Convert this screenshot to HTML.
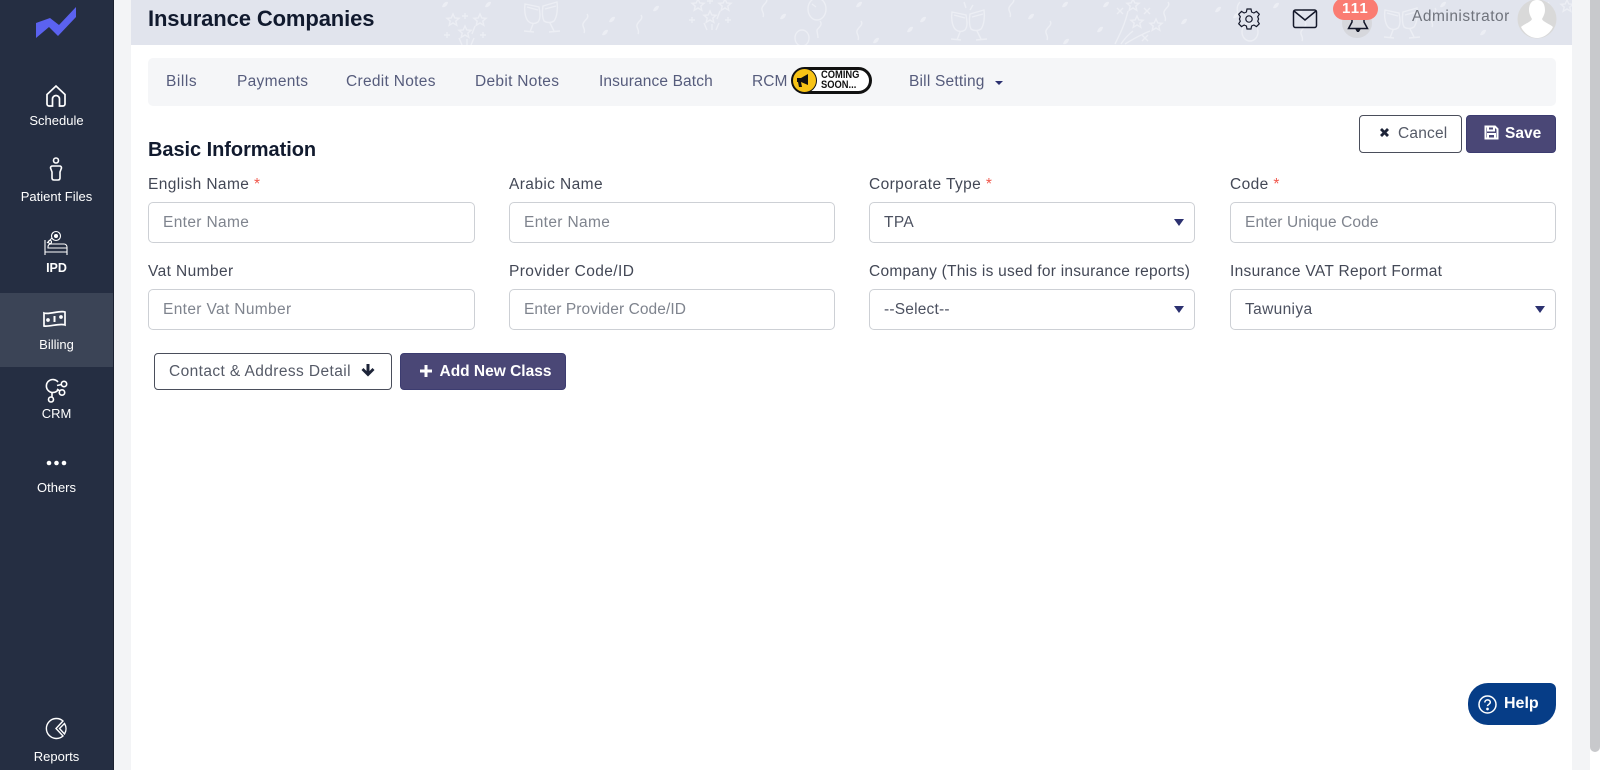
<!DOCTYPE html>
<html><head><meta charset="utf-8"><style>
*{box-sizing:border-box}
html,body{margin:0;width:1600px;height:770px;overflow:hidden;background:#fff;font-family:"Liberation Sans",sans-serif}
.a{position:absolute;white-space:nowrap}
#side{left:0;top:0;width:114px;height:770px;background:#252e42;border-right:1px solid #1b2130}
.s{left:0;width:113px;text-align:center;color:#fff;font-size:13px;line-height:16px}
.t{font-size:15.5px;color:#565c7c;line-height:20px;top:72px;letter-spacing:.3px}
.l{font-size:15.5px;color:#434856;line-height:20px;top:175px;letter-spacing:.4px}
.i{height:41px;width:326px;border:1px solid #cdd0d5;border-radius:5px;background:#fff;color:#7f848e;font-size:15.5px;line-height:39px;padding-left:14px;letter-spacing:.35px}
.sel{color:#4c5160}
.sel:after{content:"";position:absolute;right:10px;top:16px;border:5px solid transparent;border-top:7px solid #2c3170;border-bottom:0}
.b{border-radius:4px;font-size:15.5px;line-height:35px;text-align:center}
.w{background:#fff;border:1px solid #4a4e5b;color:#555a67;letter-spacing:.35px}
.p{background:#4a4776;border:1px solid #3c3c70;color:#fff;font-weight:700}
.r{color:#f0574c}
</style></head><body>
<div class="a" style="left:114px;top:0;width:17px;height:770px;background:#f3f4f6"></div>
<div class="a" style="left:1572px;top:0;width:18px;height:770px;background:#f3f4f6"></div>
<div class="a" style="left:1590px;top:0;width:10px;height:752px;background:#c8c9cc;border-radius:0 0 5px 5px"></div>

<div class="a" style="left:131px;top:0;width:1441px;height:45px;background:#e1e4ed;overflow:hidden">
<svg width="1441" height="45" viewBox="131 0 1441 45" fill="none" stroke="#eceef4" stroke-width="1.4" style="position:absolute;left:0;top:0">
<defs>
<path id="lf" d="M-3 2C-2-2 1-4 3-3 3 0 0 3-3 2z" fill="#eceef4" stroke="none"/>
<path id="st" d="M0-6l1.800 4 4.200.3-3.200 2.800 1 4.200L0 3l-3.800 2.300 1-4.200L-6-1.700l4.200-.3z"/>
<path id="sq" d="M3 0C6 4 0 6-1 10c-1 3 3 5 1 9"/>
<g id="fw"><use href="#st" x="453" y="20"/><use href="#st" x="480" y="20"/><use href="#st" x="465" y="32"/><path d="M447 32v6M444 35h6M483 32v6M480 35h6M465 13v6M462 16h6M459 38l3 7M467 39v6M474 38l-3 7M475 26l-3 8"/></g>
<g id="gl"><path d="M525 4l14 3c1 6 2 11-1 15-3 2-7 2-10-1-3-4-4-11-3-17zM527 7l11 3M533 24l-3 8M524 31l10 1"/><path d="M557 2l-14 4c-1 6-1 11 1 15 3 2 7 2 10 0 3-4 4-12 3-19zM545 9l11-3M550 23l4 8M549 32l11-1"/></g>
</defs>
<use href="#lf" x="445" y="5"/><use href="#lf" x="488" y="5"/><use href="#fw"/><use href="#gl"/>
<use href="#sq" x="584" y="14"/><use href="#lf" x="612" y="20"/><use href="#lf" x="605" y="33"/><use href="#sq" x="638" y="15"/><use href="#lf" x="656" y="9"/>
<use href="#fw" x="245" y="-15"/>
<use href="#sq" x="763" y="-2"/><use href="#lf" x="783" y="17"/>
<ellipse cx="817" cy="9" rx="9" ry="11"/><path d="M820 21c3 4-1 6-3 9 0 3 1 5 1 8M812 4l4 3"/><ellipse cx="802" cy="38" rx="7" ry="8"/>
<use href="#lf" x="859" y="5"/><use href="#sq" x="858" y="21"/><use href="#lf" x="923" y="20"/><use href="#lf" x="910" y="30"/><use href="#lf" x="876" y="41"/>
<use href="#gl" x="427" y="8"/><path d="M964 2l2 6M973 5l-3 5"/>
<use href="#sq" x="1010" y="-2"/><use href="#lf" x="1065" y="5"/><use href="#lf" x="1031" y="17"/><use href="#lf" x="1106" y="5"/><use href="#lf" x="1100" y="30"/><use href="#lf" x="1066" y="42"/><use href="#sq" x="1047" y="21"/>
<use href="#st" x="1133" y="5"/><use href="#st" x="1137" y="22"/><use href="#st" x="1156" y="25"/><path d="M1115 44c5-10 10-20 13-33M1121 44c4-6 8-10 12-13M1125 44c8-5 15-9 25-13M1117 8l6 6M1123 8l-6 6M1144 8l6 6M1150 8l-6 6M1142 35l6 6M1148 35l-6 6"/>
<use href="#sq" x="1165" y="2"/><use href="#lf" x="1184" y="22"/>
<use href="#lf" x="1218" y="10"/><use href="#lf" x="1276" y="6"/><use href="#lf" x="1236" y="16"/>
<ellipse cx="1250" cy="32" rx="8" ry="9"/><path d="M1240 2c-4 4-4 12 2 16"/><use href="#sq" x="1302" y="22"/><use href="#lf" x="1300" y="12"/>
<use href="#gl" x="860" y="6"/><use href="#lf" x="1483" y="33"/><use href="#lf" x="1443" y="5"/><use href="#st" x="1567" y="6"/><use href="#sq" x="1432" y="8"/><use href="#sq" x="1545" y="2"/>
</svg>
<div class="a" style="left:17px;top:5px;font-size:22px;font-weight:700;color:#111a2e;line-height:28px;letter-spacing:-.12px">Insurance Companies</div>
</div>

<svg class="a" style="left:1237px;top:7px" width="24" height="24" viewBox="0 0 24 24" fill="none" stroke="#14182a" stroke-width="1.2"><circle cx="12" cy="12" r="3.200"/><path d="M10 2h4l.6 3 2.300 1 2.600-1.600 2.800 2.800L20.700 9.800l.9 2.200-.9 2.200 1.600 2.600-2.800 2.800-2.600-1.600-2.300 1-.6 3h-4l-.6-3-2.300-1-2.600 1.600-2.800-2.800 1.600-2.600-.9-2.200.9-2.200-1.600-2.600 2.800-2.800 2.600 1.600 2.300-1z"/></svg>
<svg class="a" style="left:1292px;top:8px" width="26" height="22" viewBox="0 0 26 22" fill="none" stroke="#14182a" stroke-width="1.5"><rect x="1.500" y="2" width="23" height="17.500" rx="2"/><path d="M2 3l11 9 11-9"/></svg>
<div class="a" style="left:1342px;top:8px;width:30px;height:30px;border-radius:50%;background:#d6d7dc"></div>
<svg class="a" style="left:1347px;top:12px" width="22" height="20" viewBox="0 0 22 20" fill="none" stroke="#14182a" stroke-width="1.500"><path d="M1.500 16.500h19L17 10V6H5v4z"/><path d="M9 17l2 3 2-3" fill="#222"/></svg>
<div class="a" style="left:1333px;top:-2px;width:45px;height:22px;border-radius:11px;background:#fa7c72;color:#fff;font-weight:700;font-size:15px;line-height:22px;text-align:center;letter-spacing:1.200px">111</div>
<div class="a" style="left:1412px;top:7px;font-size:15.500px;color:#6f737c;line-height:20px;letter-spacing:.5px">Administrator</div>
<svg class="a" style="left:1517px;top:-1px" width="40" height="40" viewBox="0 0 40 40"><circle cx="20" cy="20" r="19.500" fill="#d9d9d9"/><path d="M20 1c6 0 8 5 8 10 0 4-2 7-3 9 1 3 8 5 11 8-3 6-9 11-16 11S7 34 4 28c3-3 10-5 11-8-1-2-3-5-3-9 0-5 2-10 8-10z" fill="#fff"/></svg>

<div class="a" id="side">
<svg class="a" style="left:36px;top:7px" width="42" height="32" viewBox="0 0 42 32"><path d="M0 16L14 11l9 7L40 0v10L22 29 13 20 0 31z" fill="#5b62ef"/></svg>
<svg class="a" style="left:44px;top:84px" width="24" height="24" viewBox="0 0 24 24" fill="none" stroke="#fff" stroke-width="1.700"><path d="M3 10.500L12 2l9 8.500V20a2 2 0 0 1-2 2h-3.500v-7a3.500 3.500 0 0 0-7 0v7H5a2 2 0 0 1-2-2z"/></svg>
<div class="a s" style="top:113px">Schedule</div>
<svg class="a" style="left:49px;top:157px" width="14" height="26" viewBox="0 0 14 26" fill="none" stroke="#fff" stroke-width="1.600"><circle cx="7" cy="3.500" r="2.500"/><path d="M3.500 9h7c1.500 0 2 1 2 2l-1.500 4v6c0 1.500-1 2-2 2H5c-1 0-2-.5-2-2v-6L1.500 11c0-1 .5-2 2-2z"/></svg>
<div class="a s" style="top:189px">Patient Files</div>
<svg class="a" style="left:43px;top:230px" width="27" height="26" viewBox="0 0 27 26" fill="none" stroke="#fff" stroke-width="1.100"><path d="M2 10v15M2 22h22v3M24 25v-8a3 3 0 0 0-3-3H8c-2 0-3 1-3 3v1h19"/><path d="M4 13l5-5"/><circle cx="13" cy="6" r="4.500"/><circle cx="13" cy="6" r="1.500" fill="#fff"/><circle cx="7" cy="12" r="1.500"/></svg>
<div class="a s" style="top:260px;font-weight:700;font-size:12.500px">IPD</div>
<div class="a" style="left:0;top:293px;width:113px;height:74px;background:#3b4456"></div>
<svg class="a" style="left:42px;top:309px" width="25" height="19" viewBox="0 0 25 19" fill="none" stroke="#fff" stroke-width="1.700"><path d="M2 4c5 2 16-3 21-1v13c-5-2-16 2-21 1z"/><path d="M12.500 7v6" stroke-width="2"/><circle cx="6" cy="11" r="1" fill="#fff"/><circle cx="19" cy="8" r="1" fill="#fff"/></svg>
<div class="a s" style="top:337px">Billing</div>
<svg class="a" style="left:44px;top:378px" width="25" height="25" viewBox="0 0 25 25" fill="none" stroke="#fff" stroke-width="1.600"><path d="M14 12A6.500 6.500 0 1 1 14 4"/><circle cx="20" cy="6" r="2.700"/><circle cx="18" cy="14.500" r="2.700"/><circle cx="7" cy="21.500" r="2.500"/><path d="M13 7.500l4.500-1M13 11l3 2M8 14.500v4.500"/></svg>
<div class="a s" style="top:406px">CRM</div>
<svg class="a" style="left:46px;top:459px" width="22" height="8" viewBox="0 0 22 8" fill="#fff"><circle cx="3" cy="4" r="2.300"/><circle cx="10.500" cy="4" r="2.300"/><circle cx="18" cy="4" r="2.300"/></svg>
<div class="a s" style="top:480px">Others</div>
<svg class="a" style="left:45px;top:717px" width="23" height="23" viewBox="0 0 23 23" fill="none" stroke="#fff" stroke-width="1.400"><path d="M18 4A10 10 0 1 0 18 19L11 11.500z"/><path d="M19.500 6.500a10 10 0 0 1 0 10.500l-5-5.500z"/></svg>
<div class="a s" style="top:749px">Reports</div>
</div>

<div class="a" style="left:148px;top:58px;width:1408px;height:48px;background:#f5f6f8;border-radius:5px"></div>
<div class="a t" style="left:166px;letter-spacing:.55px">Bills</div>
<div class="a t" style="left:237px">Payments</div>
<div class="a t" style="left:346px">Credit Notes</div>
<div class="a t" style="left:475px">Debit Notes</div>
<div class="a t" style="left:599px;letter-spacing:.12px">Insurance Batch</div>
<div class="a t" style="left:752px;letter-spacing:.05px">RCM</div>
<div class="a" style="left:791px;top:67px;width:81px;height:27px;border:3px solid #111;border-radius:14px;background:#fff"></div>
<div class="a" style="left:792px;top:68px;width:25px;height:25px;border-radius:50%;background:#f7c316;border:1px solid #111"></div>
<svg class="a" style="left:796px;top:73px" width="16" height="15" viewBox="0 0 16 15"><path d="M1 5h4l7-4v11L5 9 6 14H3L2 9H1z" fill="#111"/></svg>
<div class="a" style="left:821px;top:71px;font-size:11px;line-height:9.500px;font-weight:700;color:#111;transform:scaleX(.85);transform-origin:0 0">COMING<br>SOON...</div>
<div class="a t" style="left:909px;letter-spacing:.2px">Bill Setting</div>
<div class="a" style="left:995px;top:81px;border:4px solid transparent;border-top:4px solid #2c3170;border-bottom:0"></div>

<div class="a" style="left:148px;top:137px;font-size:20px;font-weight:700;color:#111a2e;line-height:26px;letter-spacing:-.05px">Basic Information</div>
<div class="a b w" style="left:1359px;top:115px;width:103px;height:38px;text-align:left;padding-left:18px"><svg width="13" height="13" viewBox="0 0 13 13" style="vertical-align:-1px;margin-right:7px"><path d="M2 4l2-2 2.500 2.500L9 2l2 2-2.500 2.500L11 9l-2 2-2.500-2.500L4 11 2 9l2.500-2.500z" fill="#1d2438"/></svg><span style="letter-spacing:.2px">Cancel</span></div>
<div class="a b p" style="left:1466px;top:115px;width:90px;height:38px;text-align:left;padding-left:17px"><svg width="15" height="15" viewBox="0 0 15 15" style="vertical-align:-2px;margin-right:6px" fill="none" stroke="#fff" stroke-width="2"><path d="M1.500 1.500h9.500l2.500 2.500v9.500H1.500z"/><path d="M4 1.500v4h6v-4M4 13v-4h7v4"/></svg>Save</div>

<div class="a l" style="left:148px">English Name <span class="r">*</span></div>
<div class="a l" style="left:509px">Arabic Name</div>
<div class="a l" style="left:869px">Corporate Type <span class="r">*</span></div>
<div class="a l" style="left:1230px">Code <span class="r">*</span></div>
<div class="a i" style="left:148px;top:202px;width:327px">Enter Name</div>
<div class="a i" style="left:509px;top:202px">Enter Name</div>
<div class="a i sel" style="left:869px;top:202px">TPA</div>
<div class="a i" style="left:1230px;top:202px;letter-spacing:.1px">Enter Unique Code</div>

<div class="a l" style="left:148px;top:262px">Vat Number</div>
<div class="a l" style="left:509px;top:262px">Provider Code/ID</div>
<div class="a l" style="left:869px;top:262px;letter-spacing:.25px">Company (This is used for insurance reports)</div>
<div class="a l" style="left:1230px;top:262px;letter-spacing:.3px">Insurance VAT Report Format</div>
<div class="a i" style="left:148px;top:289px;width:327px">Enter Vat Number</div>
<div class="a i" style="left:509px;top:289px;letter-spacing:.08px">Enter Provider Code/ID</div>
<div class="a i sel" style="left:869px;top:289px;letter-spacing:.2px">--Select--</div>
<div class="a i sel" style="left:1230px;top:289px">Tawuniya</div>

<div class="a b w" style="left:154px;top:353px;width:238px;height:37px;text-align:left;padding-left:14px"><span style="letter-spacing:.4px">Contact &amp; Address Detail</span><svg width="14" height="15" viewBox="0 0 14 15" style="vertical-align:-2px;margin-left:10px"><path d="M5.500 1h3v7l3-3 2 2L7 13.500.5 7l2-2 3 3z" fill="#1d2438"/></svg></div>
<div class="a b p" style="left:400px;top:353px;width:166px;height:37px;padding-left:4px"><svg width="14" height="14" viewBox="0 0 14 14" style="vertical-align:-2px;margin-right:7px"><path d="M5.500 1h3v4.500H13v3H8.500V13h-3V8.500H1v-3h4.500z" fill="#fff"/></svg>Add New Class</div>

<div class="a" style="left:1468px;top:683px;width:88px;height:42px;background:#063d87;border-radius:20px 6px 20px 20px;color:#fff;font-weight:700;font-size:16px;line-height:42px;padding-left:36px">Help</div>
<svg class="a" style="left:1478px;top:695px" width="19" height="19" viewBox="0 0 19 19" fill="none" stroke="#fff" stroke-width="1.500"><circle cx="9.500" cy="9.500" r="8.500"/><path d="M6.800 7.500c0-3.500 5.500-3.500 5.500-.2 0 2-2.800 2-2.800 3.800"/><circle cx="9.500" cy="14" r=".6" fill="#fff"/></svg>
</body></html>
